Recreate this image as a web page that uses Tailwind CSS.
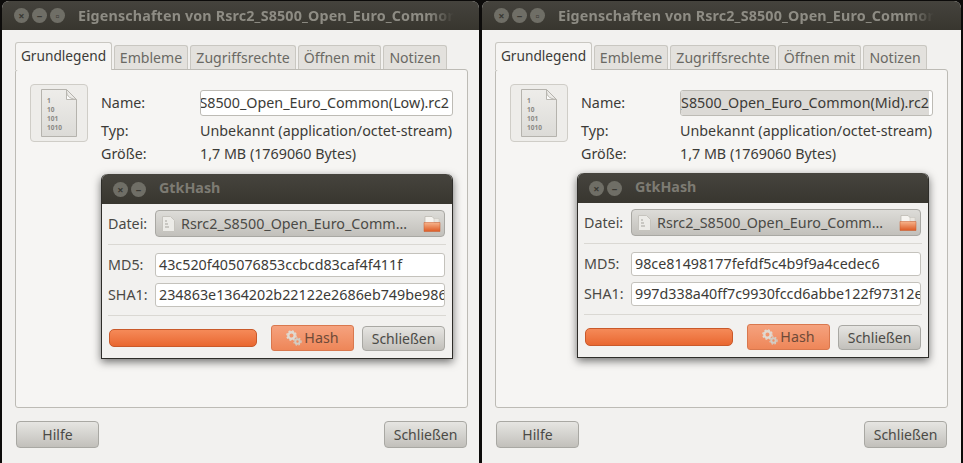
<!DOCTYPE html>
<html lang="de">
<head>
    <meta charset="UTF-8">
    <title>Eigenschaften</title>
    <script src="https://cdn.jsdelivr.net/npm/@tailwindcss/browser@4"></script>
</head>
<body class="bg-[#0c0b0a] overflow-hidden">
    <main class="flex w-[963px] h-[463px] pl-[2px] pt-[1px] gap-[3px] font-['Noto_Sans',sans-serif] text-[14.3px] text-[#3c3b37] relative"></main>

    <script>
        const gear = `<svg width="16" height="16" viewBox="0 0 16 16"><circle cx="5.5" cy="5.5" r="3.2" fill="none" stroke="#e0dad2" stroke-width="2.4"/><circle cx="5.5" cy="5.5" r="4.6" fill="none" stroke="#e0dad2" stroke-width="1.4" stroke-dasharray="2 1.6"/><circle cx="11.5" cy="11.5" r="2.2" fill="none" stroke="#d2ccc3" stroke-width="2"/><circle cx="11.5" cy="11.5" r="3.6" fill="none" stroke="#d2ccc3" stroke-width="1.2" stroke-dasharray="1.6 1.4"/></svg>`;
        const folder = `<svg width="18" height="18" viewBox="0 0 18 18"><defs><linearGradient id="fold" x1="0" y1="0" x2="0" y2="1"><stop offset="0" stop-color="#f6b48c"/><stop offset="1" stop-color="#dd5a24"/></linearGradient></defs><path d="M2 1.5h7l3 3v4H2z" fill="#f6f4f0" stroke="#b8b4ac" stroke-width=".7"/><path d="M11 3.5h5v4h-5z" fill="#e9e6e0" stroke="#c5c1b9" stroke-width=".5"/><path d="M1 7.5h16v9H1z" fill="url(#fold)" stroke="#c9592a" stroke-width=".5"/></svg>`;
        const fileIcon = `<svg width="36" height="48" viewBox="0 0 36 48"><defs><linearGradient id="page" x1="0" y1="0" x2="0" y2="1"><stop offset="0" stop-color="#eeedea"/><stop offset="1" stop-color="#dcdbd7"/></linearGradient></defs><path d="M.5.5h25l10 10v37H.5z" fill="url(#page)" stroke="#b5b3ad"/><path d="M25.5.5c0 5 1 9 10 10h-10z" fill="#fcfcfb" stroke="#b9b7b1"/><text x="6" y="14" font-size="6.5" font-weight="700" fill="#8a8984">1</text><text x="6" y="23" font-size="6.5" font-weight="700" fill="#8a8984">10</text><text x="6" y="32" font-size="6.5" font-weight="700" fill="#8a8984">101</text><text x="6" y="41" font-size="6.5" font-weight="700" fill="#8a8984">1010</text></svg>`;
        const smallFile = `<svg class="mr-[6px] shrink-0" width="13" height="16" viewBox="0 0 13 16"><path d="M.5.5h8l4 4v11H.5z" fill="#ecebe7" stroke="#c6c4be"/><path d="M3 5h2M3 8h3M3 11h4" stroke="#a5a39d"/></svg>`;

        // grey gtk button, used for Hilfe and both Schließen
        const greyButton = (label, extra) => `
            <button class="${extra} flex items-center justify-center rounded-[4px] border border-[#a9a8a3] bg-gradient-to-b from-[#e6e5e2] to-[#c2c0bb] text-[14px] text-[#4b4a46]">${label}</button>`;

        const circles = (count) => {
            const marks = ['×', '–', '▫'];
            let out = '';
            for (let i = 0; i < count; i++) {
                out += `<span class="flex items-center justify-center w-[15px] h-[15px] rounded-full bg-[#6f6e66] text-[#3a3934] text-[11px] leading-none font-bold">${marks[i]}</span>`;
            }
            return out;
        };

        const tab = (label) => `
            <div class="flex items-center justify-center h-[24px] px-[3px] rounded-t-[3px] border border-b-0 border-[#c9c7c1] bg-[#e3e1dd] text-[14.1px] text-[#6a6964] whitespace-nowrap">${label}</div>`;

        const hashDialog = (win) => `
            <section class="absolute w-[352px] h-[185px] flex flex-col rounded-t-[6px] border border-[#2e2d29] border-t-0 bg-[#f2f1ef] shadow-[0_3px_8px_rgba(0,0,0,.55)]" style="left:${win.dialogLeft}px;top:${win.dialogTop}px">
                <header class="flex items-center h-[30px] shrink-0 pl-[11px] gap-[3px] rounded-t-[6px] bg-gradient-to-b from-[#46443e] to-[#38362f]">
                    ${circles(2)}
                    <span class="ml-[10px] -mt-[2px] font-bold text-[#7d7b73]">GtkHash</span>
                </header>
                <div class="flex flex-col px-[6px] pt-[6px] grow">
                    <div class="flex items-center h-[27px]">
                        <span class="w-[47px] text-[#4a4945]">Datei:</span>
                        <div class="flex items-center w-[290px] h-[27px] pl-[6px] pr-[3px] rounded-[4px] border border-[#a9a8a3] bg-gradient-to-b from-[#dddcd8] to-[#c2c0bb] text-[#4b4a46]">
                            ${smallFile}
                            <span class="w-[238px] whitespace-nowrap overflow-hidden">Rsrc2_S8500_Open_Euro_Comm…</span>
                            <span class="ml-auto flex">${folder}</span>
                        </div>
                    </div>
                    <div class="h-px mt-[7px] bg-[#dad8d3]"></div>
                    <div class="flex items-center h-[24px] mt-[8px]">
                        <span class="w-[47px] text-[#4a4945]">MD5:</span>
                        <div class="w-[290px] h-[24px] px-[3px] leading-[22px] rounded-[3px] border border-[#c4c2bc] bg-white whitespace-nowrap overflow-hidden">${win.md5}</div>
                    </div>
                    <div class="flex items-center h-[24px] mt-[6px]">
                        <span class="w-[47px] text-[#4a4945]">SHA1:</span>
                        <div class="w-[290px] h-[24px] px-[3px] leading-[22px] rounded-[3px] border border-[#c4c2bc] bg-white whitespace-nowrap overflow-hidden">${win.sha1}</div>
                    </div>
                    <div class="h-px mt-[8px] bg-[#dad8d3]"></div>
                    <div class="flex items-center mt-[9px]">
                        <div class="w-[148px] h-[18px] ml-px rounded-[5px] border border-[#c9592a] bg-gradient-to-b from-[#f58a58] to-[#e9672f]"></div>
                        <button class="flex items-center justify-center gap-[2px] w-[83px] h-[26px] ml-[14px] rounded-[3px] border border-[#d9784e] bg-gradient-to-b from-[#f5a27e] to-[#ee8658] text-[#6f4a38]">${gear}Hash</button>
                        ${greyButton('Schließen', 'w-[83px] h-[25px] ml-[8px]')}
                    </div>
                </div>
            </section>`;

        const createWindow = (win) => `
            <article class="flex flex-col h-[462px] shrink-0 rounded-t-[7px] overflow-hidden bg-[#f2f1ef]" style="width:${win.width}px">
                <header class="flex items-center h-[29px] shrink-0 pl-[12px] gap-[3px] bg-gradient-to-b from-[#45433d] to-[#38362f]">
                    ${circles(3)}
                    <span class="ml-[10px] w-[376px] font-bold tracking-[.15px] text-[#8e8c84] whitespace-nowrap overflow-hidden [mask-image:linear-gradient(to_right,black_93%,transparent)]">Eigenschaften von Rsrc2_S8500_Open_Euro_Common(${win.level}).rc2</span>
                </header>
                <div class="flex items-end h-[39px] pl-[13px] gap-[2px]">
                    <div class="flex items-center justify-center w-[97px] h-[28px] -mb-px z-10 rounded-t-[3px] border border-b-0 border-[#c9c7c1] bg-[#f6f5f3] text-[13.7px]">Grundlegend</div>
                    <div class="w-[74px]">${tab('Embleme')}</div>
                    <div class="w-[106px]">${tab('Zugriffsrechte')}</div>
                    <div class="w-[83px]">${tab('Öffnen mit')}</div>
                    <div class="w-[64px]">${tab('Notizen')}</div>
                </div>
                <div class="w-[453px] h-[339px] ml-[13px] pl-[14px] pt-[14px] flex gap-[13px] rounded-[3px] border border-[#bdbbb5] bg-[#f6f5f3]">
                    <div class="flex items-center justify-center w-[58px] h-[58px] shrink-0 rounded-[4px] border border-[#cfcdc7] bg-[#eeedea]">${fileIcon}</div>
                    <div class="flex flex-col w-[352px] pt-[6px]">
                        <div class="flex items-center h-[26px]">
                            <span class="w-[99px]">Name:</span>
                            <div class="flex justify-end w-[253px] h-[26px] px-[3px] leading-[24px] rounded-[3px] border border-[#bdbbb5] bg-white whitespace-nowrap overflow-hidden">
                                <span class="${win.nameClass}">Rsrc2_S8500_Open_Euro_Common(${win.level}).rc2</span>
                            </div>
                        </div>
                        <div class="flex items-center h-[20px] mt-[5px]"><span class="w-[99px]">Typ:</span><span class="whitespace-nowrap">Unbekannt (application/octet-stream)</span></div>
                        <div class="flex items-center h-[20px] mt-[3px]"><span class="w-[99px]">Größe:</span><span>1,7 MB (1769060 Bytes)</span></div>
                    </div>
                </div>
                <footer class="flex justify-between w-[451px] ml-[14px] mt-[13px]">
                    ${greyButton('Hilfe', 'w-[83px] h-[27px]')}
                    ${greyButton('Schließen', 'w-[83px] h-[27px]')}
                </footer>
            </article>`;

        const windows = [
            { width: 477, level: 'Low', nameClass: '', dialogLeft: 101, dialogTop: 174, md5: '43c520f405076853ccbcd83caf4f411f', sha1: '234863e1364202b22122e2686eb749be986' },
            { width: 479, level: 'Mid', nameClass: 'bg-[#dcdad6]', dialogLeft: 577, dialogTop: 173, md5: '98ce81498177fefdf5c4b9f9a4cedec6', sha1: '997d338a40ff7c9930fccd6abbe122f97312e' }
        ];

        const main = document.querySelector('main');
        main.innerHTML = windows.map(createWindow).join('') + windows.map(hashDialog).join('');
    </script>
</body>
</html>
